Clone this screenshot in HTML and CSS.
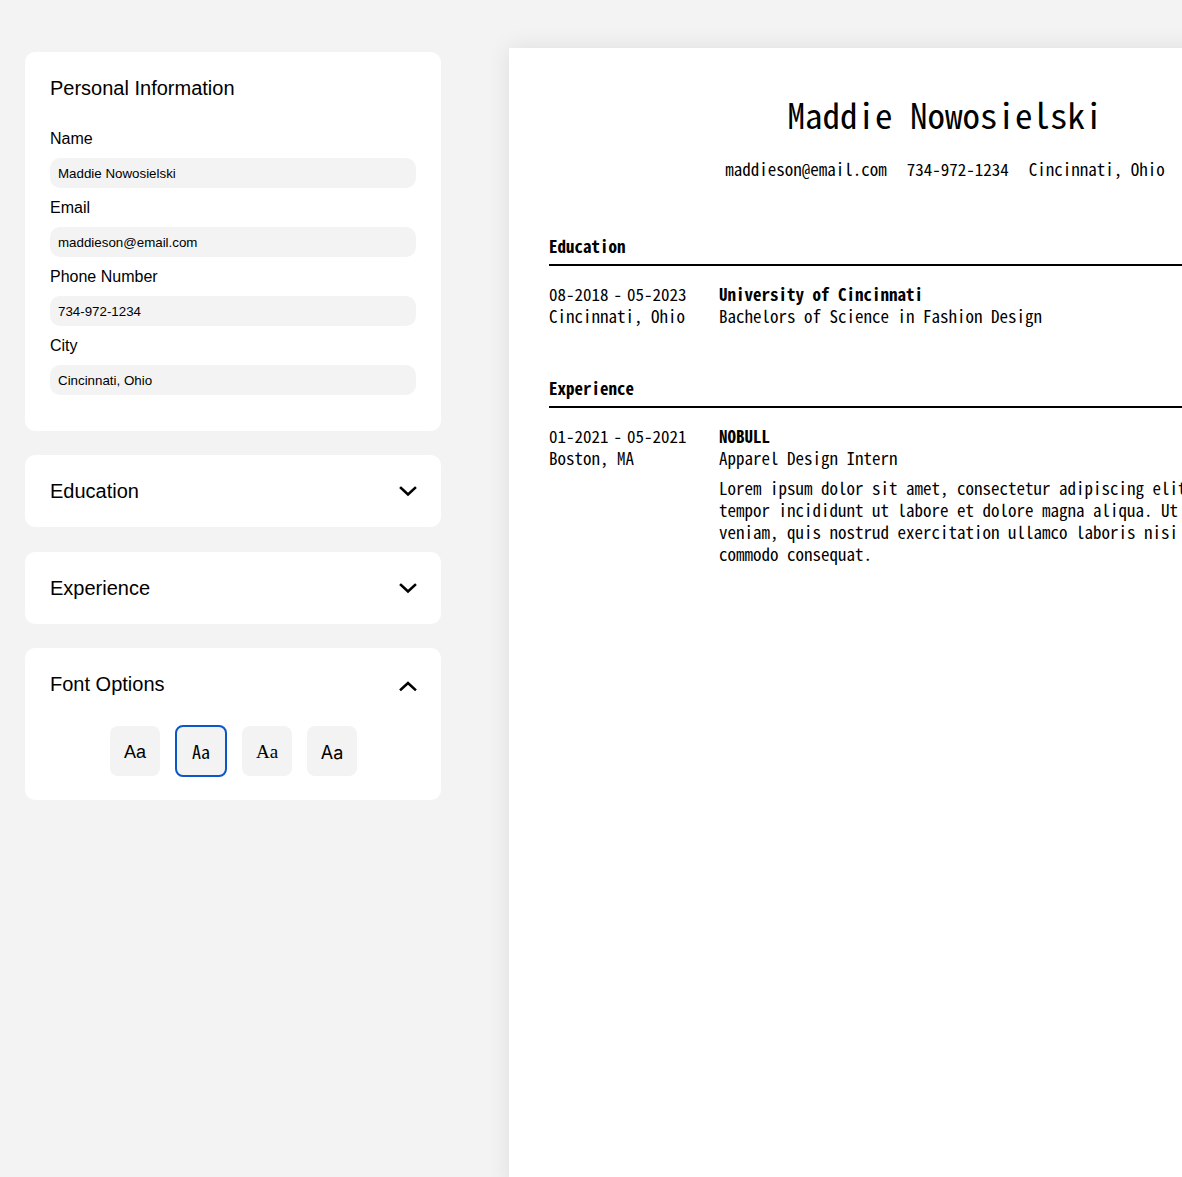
FILE: index.html
```html
<!DOCTYPE html>
<html lang="en">
<head>
<meta charset="utf-8">
<title>Resume Builder</title>
<link rel="stylesheet" href="styles.css">
</head>
<body>
<div class="app">
  <aside class="sidebar">
    <section class="card">
      <h2 class="card-title">Personal Information</h2>
      <div class="fields">
        <label class="field">
          <span class="field-label">Name</span>
          <input class="field-input" type="text" value="Maddie Nowosielski">
        </label>
        <label class="field">
          <span class="field-label">Email</span>
          <input class="field-input" type="text" value="maddieson@email.com">
        </label>
        <label class="field">
          <span class="field-label">Phone Number</span>
          <input class="field-input" type="text" value="734-972-1234">
        </label>
        <label class="field">
          <span class="field-label">City</span>
          <input class="field-input" type="text" value="Cincinnati, Ohio">
        </label>
      </div>
    </section>

    <section class="card collapsible">
      <div class="card-head">
        <h2 class="card-title">Education</h2>
        <svg class="chev" width="18" height="12" viewBox="0 0 18 12"><path d="M2 3 L9 9.5 L16 3" fill="none" stroke="#000" stroke-width="2.6" stroke-linecap="square"/></svg>
      </div>
    </section>

    <section class="card collapsible">
      <div class="card-head">
        <h2 class="card-title">Experience</h2>
        <svg class="chev" width="18" height="12" viewBox="0 0 18 12"><path d="M2 3 L9 9.5 L16 3" fill="none" stroke="#000" stroke-width="2.6" stroke-linecap="square"/></svg>
      </div>
    </section>

    <section class="card collapsible">
      <div class="card-head">
        <h2 class="card-title">Font Options</h2>
        <svg class="chev up" width="18" height="12" viewBox="0 0 18 12"><path d="M2 9.5 L9 3 L16 9.5" fill="none" stroke="#000" stroke-width="2.6" stroke-linecap="square"/></svg>
      </div>
      <div class="font-options">
        <button class="font-btn f-sans">Aa</button>
        <button class="font-btn f-mono selected">Aa</button>
        <button class="font-btn f-serif">Aa</button>
        <button class="font-btn f-alt">Aa</button>
      </div>
    </section>
  </aside>

  <main class="paper">
    <header class="resume-head">
      <h1 class="resume-name">Maddie Nowosielski</h1>
      <div class="contact">
        <span>maddieson@email.com</span>
        <span>734-972-1234</span>
        <span>Cincinnati, Ohio</span>
      </div>
    </header>

    <section class="r-section">
      <h3 class="r-title">Education</h3>
      <div class="r-item">
        <div class="r-meta">
          <div>08-2018<span class="dash">-</span>05-2023</div>
          <div>Cincinnati, Ohio</div>
        </div>
        <div class="r-body">
          <div class="r-org">University of Cincinnati</div>
          <div>Bachelors of Science in Fashion Design</div>
        </div>
      </div>
    </section>

    <section class="r-section">
      <h3 class="r-title">Experience</h3>
      <div class="r-item">
        <div class="r-meta">
          <div>01-2021<span class="dash">-</span>05-2021</div>
          <div>Boston, MA</div>
        </div>
        <div class="r-body">
          <div class="r-org">NOBULL</div>
          <div>Apparel Design Intern</div>
          <p class="r-desc">Lorem ipsum dolor sit amet, consectetur adipiscing elit, sed do eiusmod tempor incididunt ut labore et dolore magna aliqua. Ut enim ad minim veniam, quis nostrud exercitation ullamco laboris nisi ut aliquip ex ea commodo consequat.</p>
        </div>
      </div>
    </section>
  </main>
</div>
</body>
</html>
```

FILE: styles.css
```css
html, body {
  margin: 0;
  padding: 0;
  overflow: hidden;
  background: #f3f3f3;
}

body {
  font-family: "Liberation Sans", Arial, sans-serif;
  color: #000;
}

.app {
  display: flex;
  align-items: flex-start;
  padding-left: 25px;
  width: max-content;
}

.sidebar {
  width: 416px;
  margin-top: 52px;
  display: flex;
  flex-direction: column;
  gap: 24.5px;
}

.card {
  background: #fff;
  border-radius: 10px;
  padding: 24px 25px 35.5px;
}

.card.collapsible {
  padding: 24px 24px 24px 25px;
}

.card-title {
  margin: 0;
  font-size: 20px;
  line-height: 24px;
  font-weight: normal;
}

.card-head {
  display: flex;
  align-items: center;
  justify-content: space-between;
  height: 24px;
}

.chev {
  display: block;
}

.chev.up {
  margin-top: 3px;
}

.fields {
  margin-top: 30px;
  display: flex;
  flex-direction: column;
  gap: 11px;
}

.field {
  display: flex;
  flex-direction: column;
  gap: 10px;
}

.field-label {
  font-size: 16px;
  line-height: 18px;
}

.field-input {
  box-sizing: border-box;
  width: 100%;
  height: 30px;
  border: none;
  border-radius: 10px;
  background: #f3f3f3;
  padding: 0 8px;
  font-family: "Liberation Sans", Arial, sans-serif;
  font-size: 13.33px;
  color: #000;
  outline: none;
}

.font-options {
  margin-top: 30px;
  display: flex;
  justify-content: center;
  gap: 15px;
}

.font-btn {
  box-sizing: border-box;
  width: 50px;
  height: 50px;
  border: none;
  border-radius: 8px;
  background: #f3f3f3;
  color: #000;
  font-size: 18px;
  padding: 2px 0 0;
  display: flex;
  align-items: center;
  justify-content: center;
}

.font-btn.selected {
  width: 52px;
  height: 52px;
  margin: -1px 0;
  border: 2px solid #0b57c7;
  padding: 0;
}

.f-sans { font-family: "Liberation Sans", Arial, sans-serif; }
.f-mono { font-family: "Noto Sans Mono CJK SC", monospace; }
.f-serif { font-family: "Liberation Serif", "Times New Roman", serif; font-size: 19px; }
.f-alt { font-family: Inter, sans-serif; }

.paper {
  box-sizing: border-box;
  width: 872px;
  min-height: 1140px;
  margin-top: 48px;
  margin-left: 68px;
  background: #fff;
  box-shadow: 0 0 22px rgba(0, 0, 0, 0.09);
  padding: 45px 40px 40px;
  font-family: "Noto Sans Mono CJK SC", "DejaVu Sans Mono", monospace;
  font-size: 17px;
  line-height: 22px;
}

.resume-head {
  text-align: center;
}

.resume-name {
  margin: 0;
  font-size: 35px;
  line-height: 42px;
  font-weight: normal;
}

.contact {
  margin-top: 23px;
  display: flex;
  justify-content: center;
  gap: 20px;
}

.r-section {
  margin-top: 55px;
}

.r-section + .r-section {
  margin-top: 50px;
}

.r-title {
  margin: 0;
  font-size: 17px;
  line-height: 22px;
  font-weight: bold;
  padding-bottom: 7px;
  border-bottom: 2px solid #000;
}

.r-item {
  display: flex;
  margin-top: 17px;
}

.r-meta {
  width: 170px;
  flex: none;
}

.dash {
  margin: 0 5px;
}

.r-body {
  flex: 1;
}

.r-org {
  font-weight: bold;
}

.r-desc {
  margin: 8px 0 0;
}
```
